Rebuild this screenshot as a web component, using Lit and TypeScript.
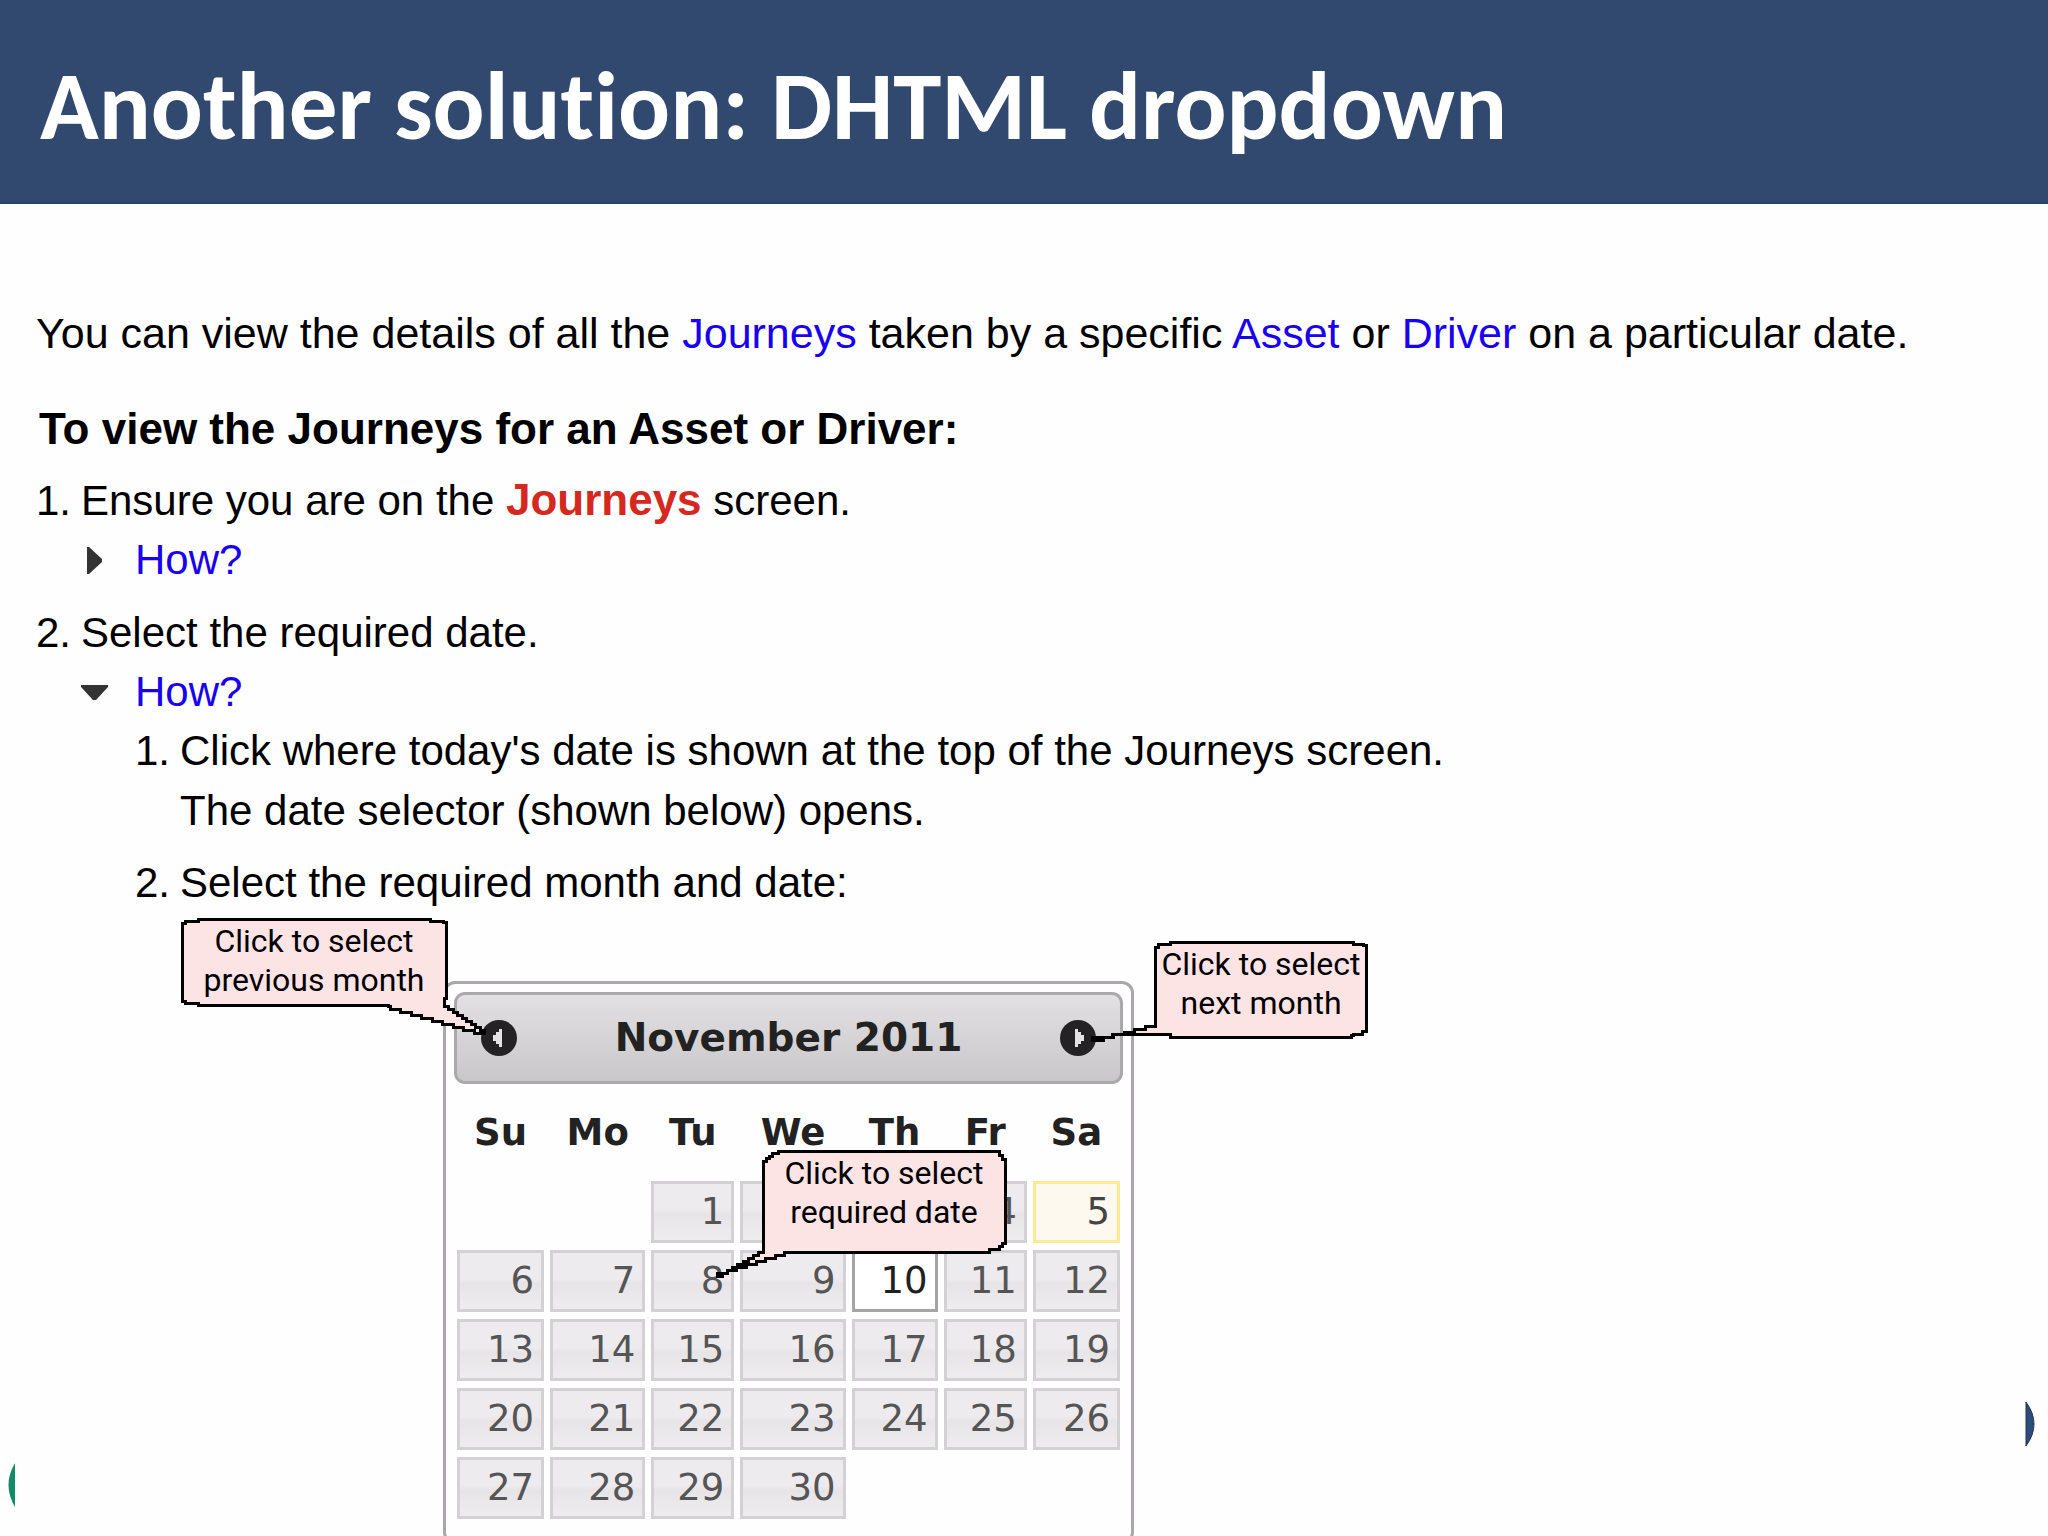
import { LitElement, html, svg, css } from "lit";
import { customElement, property, state } from "lit/decorators.js";
import { classMap } from "lit/directives/class-map.js";

type Point = [number, number];

const STEP = 3;

/* Turns an outline into a staircase path on a coarse pixel grid. */
function steppedPath(points: Point[]): string {
  const out: string[] = [`M${points[0][0]} ${points[0][1]}`];
  points.forEach(([x0, y0], i) => {
    const [x1, y1] = points[(i + 1) % points.length];
    const dx = x1 - x0;
    const dy = y1 - y0;
    const n = Math.max(1, Math.round(Math.min(Math.abs(dx), Math.abs(dy)) / STEP));
    for (let k = 1; k <= n; k++) {
      const x = Math.round(x0 + (dx * k) / n);
      const y = Math.round(y0 + (dy * k) / n);
      out.push(`H${x}V${y}`);
    }
  });
  return out.join("") + "Z";
}

@customElement("callout-note")
class CalloutNote extends LitElement {
  @property({ attribute: false }) outline: Point[] = [];
  @property({ attribute: false }) size: Point = [0, 0];
  @property({ attribute: false }) lines: string[] = [];

  static styles = css`
    :host {
      display: block;
      pointer-events: none;
    }
    .shape {
      position: absolute;
      left: 0;
      top: 0;
      overflow: visible;
    }
    .text {
      position: relative;
      margin: 0;
      text-align: center;
      font: 32px/39px Roboto, "Liberation Sans", sans-serif;
      color: #000;
      white-space: nowrap;
    }
  `;

  render() {
    const [w, h] = this.size;
    return html`
      <svg class="shape" width=${w} height=${h} aria-hidden="true">
        ${svg`<path d=${steppedPath(this.outline)} fill="#fce4e5" stroke="#000" stroke-width="3" shape-rendering="crispEdges"/>`}
      </svg>
      <p class="text">${this.lines[0]}<br />${this.lines[1]}</p>
    `;
  }
}

const WEEKDAYS = ["Su", "Mo", "Tu", "We", "Th", "Fr", "Sa"];
const MONTHS = [
  "January", "February", "March", "April", "May", "June",
  "July", "August", "September", "October", "November", "December",
];

@customElement("date-selector")
class DateSelector extends LitElement {
  @state() private year = 2011;
  @state() private month = 10;
  @state() private selected = 10;

  static styles = css`
    :host {
      display: block;
      box-sizing: border-box;
      border: 3px solid #a9a7a9;
      border-radius: 12px;
      padding: 8px 8px 15px;
      background: #fefefe;
      font-family: "DejaVu Sans", Verdana, sans-serif;
      font-size: 37px;
      color: #222;
    }
    .bar {
      display: flex;
      align-items: center;
      justify-content: space-between;
      box-sizing: border-box;
      height: 92px;
      padding: 0 24px;
      border: 3px solid #aaa8aa;
      border-radius: 11px;
      background: linear-gradient(#e2e0e2, #c9c7c9);
    }
    .title {
      margin: 0;
      font-size: 39px;
      line-height: 44px;
      font-weight: bold;
    }
    .nav {
      display: block;
      width: 36px;
      height: 36px;
      padding: 0;
      border: 0;
      background: none;
    }
    .icon {
      display: block;
    }
    .days {
      table-layout: fixed;
      margin-top: 15px;
      border-collapse: separate;
      border-spacing: 6px 7px;
      margin-inline: -3px;
      width: calc(100% + 6px);
    }
    .w0 { width: 87px; }
    .w1 { width: 95px; }
    .w2 { width: 83px; }
    .w3 { width: 105px; }
    .w4 { width: 86px; }
    .w5 { width: 83px; }
    .w6 { width: 87px; }
    th {
      height: 68px;
      padding: 0;
      line-height: 44px;
      font-weight: bold;
      vertical-align: top;
    }
    .head {
      display: block;
      padding-top: 5px;
    }
    td {
      padding: 0;
    }
    .day {
      display: block;
      box-sizing: border-box;
      width: 100%;
      height: 62px;
      padding: 0 7px;
      border: 3px solid #d3d1d3;
      background: linear-gradient(#edebed 0 46%, #e6e4e6 54%, #ebe9eb 80%, #eeedee);
      color: #555;
      font: inherit;
      line-height: 56px;
      text-align: right;
    }
    .today {
      border-color: #fbeb94;
      background: #fdf9ee;
      color: #444;
    }
    .selected {
      border-color: #a5a5a5;
      background: #fff;
      color: #212121;
    }
  `;

  private shift(by: number) {
    const d = new Date(this.year, this.month + by, 1);
    this.year = d.getFullYear();
    this.month = d.getMonth();
    this.selected = 0;
  }

  private weeks(): number[][] {
    const first = new Date(this.year, this.month, 1).getDay();
    const count = new Date(this.year, this.month + 1, 0).getDate();
    const rows: number[][] = [];
    for (let start = 1 - first; start <= count; start += 7) {
      rows.push(WEEKDAYS.map((_, i) => (start + i > 0 && start + i <= count ? start + i : 0)));
    }
    return rows;
  }

  render() {
    const november = this.year === 2011 && this.month === 10;
    return html`
      <div class="bar">
        <button class="nav" aria-label="Previous month" @click=${() => this.shift(-1)}>
          <svg class="icon" width="36" height="36" viewBox="0 0 36 36">
            <circle cx="18" cy="18" r="18" fill="#242224" />
            <path d="M21 9V27H18V24H15V21H12V15H15V12H18V9Z" fill="#e4e2e4" />
          </svg>
        </button>
        <h2 class="title">${MONTHS[this.month]} ${this.year}</h2>
        <button class="nav" aria-label="Next month" @click=${() => this.shift(1)}>
          <svg class="icon" width="36" height="36" viewBox="0 0 36 36">
            <circle cx="18" cy="18" r="18" fill="#242224" />
            <path d="M15 9V27H18V24H21V21H24V15H21V12H18V9Z" fill="#e4e2e4" />
          </svg>
        </button>
      </div>
      <table class="days">
        <colgroup>
          ${WEEKDAYS.map((_, i) => html`<col class="w${i}" />`)}
        </colgroup>
        <thead>
          <tr>
            ${WEEKDAYS.map((d) => html`<th scope="col"><span class="head">${d}</span></th>`)}
          </tr>
        </thead>
        <tbody>
          ${this.weeks().map(
            (week) => html`<tr>
              ${week.map((n) =>
                n
                  ? html`<td>
                      <button
                        class=${classMap({
                          day: true,
                          today: november && n === 5,
                          selected: n === this.selected,
                        })}
                        @click=${() => (this.selected = n)}
                      >${n}</button>
                    </td>`
                  : html`<td></td>`
              )}
            </tr>`
          )}
        </tbody>
      </table>
    `;
  }
}

const PREVIOUS: Point[] = [
  [2, 6], [5, 4], [18, 4], [18, 2], [249, 2], [250, 4], [263, 5], [266, 8], [266, 81],
  [264, 82], [264, 89], [304, 116], [210, 89], [208, 88], [18, 88], [18, 86], [5, 84], [2, 81],
];
const NEXT: Point[] = [
  [65, 7], [68, 4], [79, 4], [80, 2], [262, 2], [263, 4], [273, 5], [276, 8], [276, 91],
  [272, 94], [263, 95], [261, 97], [81, 97], [80, 94], [41, 94], [2, 100], [65, 83],
];
const REQUIRED: Point[] = [
  [48, 12], [57, 4], [63, 2], [274, 2], [284, 6], [290, 14], [290, 94], [284, 100],
  [274, 103], [79, 103], [2, 127], [48, 100],
];

@customElement("app-root")
class AppRoot extends LitElement {
  @state() private firstOpen = false;
  @state() private secondOpen = true;

  static styles = css`
    :host {
      display: block;
      position: relative;
      box-sizing: border-box;
      height: 100vh;
      overflow: hidden;
      background: #fefefe;
      color: #000;
      font: 42px/60px "Liberation Sans", Arial, sans-serif;
    }
    .banner {
      box-sizing: border-box;
      padding: 55px 40px 45px;
      background: #31486f;
      border-bottom: 2px solid #2b3f6b;
    }
    .headline {
      margin: 0;
      color: #fff;
      font: bold 97px/102px Carlito, Lato, sans-serif;
      font-variant-ligatures: none;
    }
    .content {
      padding: 99px 36px 0;
    }
    .intro {
      margin: 0;
      font-size: 43px;
    }
    .task {
      margin: 36px 0 12px;
      padding-left: 3px;
      font-size: 44px;
      color: #000;
    }
    .steps {
      margin: 0;
      padding: 0;
      list-style: none;
      display: grid;
      gap: 14px;
    }
    .step {
      display: grid;
      grid-template-columns: 45px 1fr;
    }
    .body {
      min-width: 0;
    }
    .line {
      margin: 0;
    }
    .link {
      color: #1a00f0;
      text-decoration: none;
    }
    .screen {
      color: #d5281f;
      font-size: 44px;
      line-height: 48px;
    }
    .toggle {
      display: flex;
      align-items: center;
      gap: 27px;
      padding: 0;
      border: 0;
      background: none;
      font: inherit;
      line-height: 58px;
      color: #1a00f0;
    }
    .arrow {
      display: block;
    }
    .nested {
      padding-left: 54px;
      gap: 12px;
    }
    .figure {
      position: relative;
      margin: 0;
      padding: 68px 0 0 263px;
    }
    .calendar {
      width: 691px;
    }
    .note {
      position: absolute;
    }
    .previous {
      left: 0;
      top: 4px;
      width: 268px;
      padding-top: 5px;
    }
    .next {
      left: 910px;
      top: 27px;
      width: 214px;
      padding: 5px 0 0 64px;
    }
    .required {
      left: 535px;
      top: 236px;
      width: 242px;
      padding: 5px 0 0 48px;
    }
    .edge {
      position: absolute;
      display: block;
    }
    .left {
      left: 8px;
      bottom: 29px;
    }
    .right {
      right: 13px;
      bottom: 89px;
    }
  `;

  private arrow(open: boolean) {
    return html`<svg class="arrow" width="27" height="27" viewBox="0 0 27 27" aria-hidden="true">
      ${open
        ? svg`<path d="M0 6H27V8L15 21H12L0 8Z" fill="#333"/>`
        : svg`<path d="M6 0H8L21 12V15L8 27H6Z" fill="#333"/>`}
    </svg>`;
  }

  render() {
    return html`
      <header class="banner">
        <h1 class="headline">Another solution: DHTML dropdown</h1>
      </header>
      <main class="content">
        <p class="intro">
          You can view the details of all the <a class="link" href="#journeys">Journeys</a> taken by a
          specific <a class="link" href="#asset">Asset</a> or
          <a class="link" href="#driver">Driver</a> on a particular date.
        </p>
        <h2 class="task">To view the Journeys for an Asset or Driver:</h2>
        <ol class="steps">
          <li class="step">
            <span>1.</span>
            <div class="body">
              <p class="line">Ensure you are on the <b class="screen">Journeys</b> screen.</p>
              <button class="toggle" aria-expanded=${this.firstOpen} @click=${() => (this.firstOpen = !this.firstOpen)}>
                ${this.arrow(this.firstOpen)}<span>How?</span>
              </button>
            </div>
          </li>
          <li class="step">
            <span>2.</span>
            <div class="body">
              <p class="line">Select the required date.</p>
              <button class="toggle" aria-expanded=${this.secondOpen} @click=${() => (this.secondOpen = !this.secondOpen)}>
                ${this.arrow(this.secondOpen)}<span>How?</span>
              </button>
              ${this.secondOpen ? this.dateSteps() : ""}
            </div>
          </li>
        </ol>
      </main>
      <svg class="edge left" width="7" height="44" viewBox="0 0 7 44" aria-hidden="true">
        <path d="M7 0Q-6 22 7 44Z" fill="#128a68" />
      </svg>
      <svg class="edge right" width="10" height="46" viewBox="0 0 10 46" aria-hidden="true">
        <path d="M1 1Q17 23 1 45Z" fill="#2f4a7c" stroke="#26324f" stroke-width="1" />
      </svg>
    `;
  }

  private dateSteps() {
    return html`
      <ol class="steps nested">
        <li class="step">
          <span>1.</span>
          <div class="body">
            <p class="line">Click where today's date is shown at the top of the Journeys screen.</p>
            <p class="line">The date selector (shown below) opens.</p>
          </div>
        </li>
        <li class="step">
          <span>2.</span>
          <div class="body">
            <p class="line">Select the required month and date:</p>
            <figure class="figure">
              <date-selector class="calendar"></date-selector>
              <callout-note class="note previous" .size=${[306, 118]} .outline=${PREVIOUS}
                .lines=${["Click to select", "previous month"]}></callout-note>
              <callout-note class="note next" .size=${[278, 102]} .outline=${NEXT}
                .lines=${["Click to select", "next month"]}></callout-note>
              <callout-note class="note required" .size=${[292, 130]} .outline=${REQUIRED}
                .lines=${["Click to select", "required date"]}></callout-note>
            </figure>
          </div>
        </li>
      </ol>
    `;
  }
}
